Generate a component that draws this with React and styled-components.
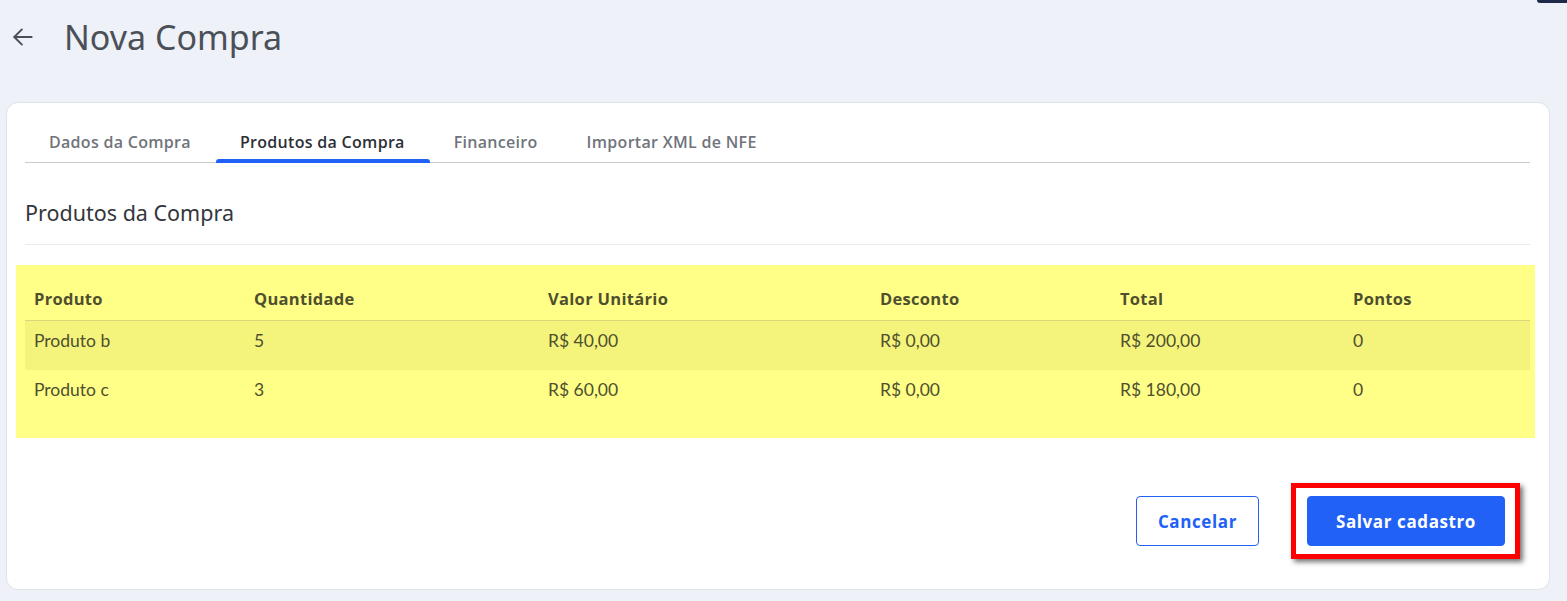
import styled, { createGlobalStyle } from "styled-components";

const GlobalStyle = createGlobalStyle`
  body {
    margin: 0;
    background: #eef1f7;
    font-family: "Noto Sans", sans-serif;
  }
`

const Page = styled.div`
  position: relative;
  width: 1567px;
  height: 601px;
  padding: 0 17px 0 6px;
  box-sizing: border-box;
  overflow: hidden;
`

const TopCorner = styled.div`
  position: absolute;
  top: 0;
  right: 0;
  width: 30px;
  height: 3px;
  background: #1e2a4a;
  border-bottom-left-radius: 3px;
`

const Header = styled.div`
  display: flex;
  align-items: center;
  height: 74px;
  padding-left: 4px;
  gap: 28px;
`

const BackButton = styled.button`
  display: flex;
  align-items: center;
  border: none;
  background: none;
  padding: 0;
  color: #4b5058;
  cursor: pointer;
`

const Title = styled.h1`
  margin: 0;
  font-family: "Noto Sans", sans-serif;
  font-size: 34px;
  font-weight: 400;
  color: #4b5058;
`

const Card = styled.div`
  margin-top: 28px;
  background: #fff;
  border: 1px solid #dfe2e8;
  border-radius: 12px;
  padding: 19px 19px 44px 18px;
  height: 488px;
  box-sizing: border-box;
`

const Tabs = styled.div`
  display: flex;
  border-bottom: 1px solid #c9ccd1;
`

const Tab = styled.div`
  position: relative;
  height: 40px;
  display: flex;
  align-items: center;
  padding: 0 25px 0 24px;
  font-family: "Open Sans", sans-serif;
  font-size: 16px;
  letter-spacing: 0.3px;
  font-weight: 600;
  color: ${p => (p.$active ? "#2d3036" : "#70747b")};
  &::after {
    content: "";
    display: ${p => (p.$active ? "block" : "none")};
    position: absolute;
    left: 0;
    right: 0;
    bottom: -1px;
    height: 4px;
    border-radius: 3px 3px 0 0;
    background: #2161f6;
  }
`

const SectionTitle = styled.h2`
  margin: 35px 0 0;
  padding-bottom: 17px;
  font-family: "Noto Sans", sans-serif;
  font-size: 21.5px;
  font-weight: 400;
  color: #33363b;
  border-bottom: 1px solid #e8eaee;
`

const TableArea = styled.div`
  margin: 20px -5px 0 -9px;
  padding: 14px 5px 19px 9px;
  background: #ffff88;
`

const Table = styled.table`
  width: 100%;
  border-collapse: collapse;
  font-family: "Lato", sans-serif;
  font-size: 17.5px;
  color: #4f4f2e;
  table-layout: fixed;
`

const Th = styled.th`
  text-align: left;
  font-family: "Open Sans", sans-serif;
  font-size: 16.5px;
  letter-spacing: 0.3px;
  font-weight: 700;
  height: 39px;
  padding: 0 9px 2px;
  border-bottom: 1px solid #d8d676;
  width: ${p => (p.$w ? `${p.$w - 18}px` : "auto")};
`

const Row = styled.tr`
  background: ${p => (p.$striped ? "#f4f47c" : "transparent")};
`

const Td = styled.td`
  height: 40px;
  padding: 9px 9px 0;
  vertical-align: top;
`

const Actions = styled.div`
  display: flex;
  justify-content: flex-end;
  align-items: center;
  gap: 32px;
  margin-top: 45px;
  padding-right: 10px;
`

const Button = styled.button`
  height: 50px;
  padding: 0 ${p => (p.$primary ? "28px" : "21px")};
  border-radius: 4px;
  border: 1px solid #2161f6;
  background: ${p => (p.$primary ? "#2161f6" : "#fff")};
  color: ${p => (p.$primary ? "#fff" : "#2161f6")};
  font-family: "Open Sans", sans-serif;
  font-size: 17px;
  letter-spacing: 0.6px;
  font-weight: 700;
  cursor: pointer;
`

const Highlight = styled.div`
  border: 5px solid #ff0000;
  padding: 8px 10px 8px 11px;
  box-shadow: 3px 3px 5px rgba(0, 0, 0, 0.55);
  display: flex;
`

const columns = [
  { label: "Produto", w: 220 },
  { label: "Quantidade", w: 294 },
  { label: "Valor Unitário", w: 332 },
  { label: "Desconto", w: 240 },
  { label: "Total", w: 233 },
  { label: "Pontos" },
]

const items = [
  ["Produto b", "5", "R$ 40,00", "R$ 0,00", "R$ 200,00", "0"],
  ["Produto c", "3", "R$ 60,00", "R$ 0,00", "R$ 180,00", "0"],
]

const tabs = ["Dados da Compra", "Produtos da Compra", "Financeiro", "Importar XML de NFE"]

const App = () => {
  return (
    <>
      <GlobalStyle />
      <Page>
        <TopCorner />
        <Header>
          <BackButton>
            <svg width="26" height="26" viewBox="0 0 24 24" fill="none" stroke="currentColor" strokeWidth="1.8" strokeLinecap="round" strokeLinejoin="round">
              <path d="M20 12H4" />
              <path d="M11 5l-7 7 7 7" />
            </svg>
          </BackButton>
          <Title>Nova Compra</Title>
        </Header>
        <Card>
          <Tabs>
            {tabs.map((t, i) => (
              <Tab key={t} $active={i === 1}>{t}</Tab>
            ))}
          </Tabs>
          <SectionTitle>Produtos da Compra</SectionTitle>
          <TableArea>
            <Table>
              <thead>
                <tr>
                  {columns.map(c => (
                    <Th key={c.label} $w={c.w}>{c.label}</Th>
                  ))}
                </tr>
              </thead>
              <tbody>
                {items.map((row, i) => (
                  <Row key={i} $striped={i % 2 === 0}>
                    {row.map((cell, j) => (
                      <Td key={j}>{cell}</Td>
                    ))}
                  </Row>
                ))}
              </tbody>
            </Table>
          </TableArea>
          <Actions>
            <Button>Cancelar</Button>
            <Highlight>
              <Button $primary>Salvar cadastro</Button>
            </Highlight>
          </Actions>
        </Card>
      </Page>
    </>
  );
};

export default App;
